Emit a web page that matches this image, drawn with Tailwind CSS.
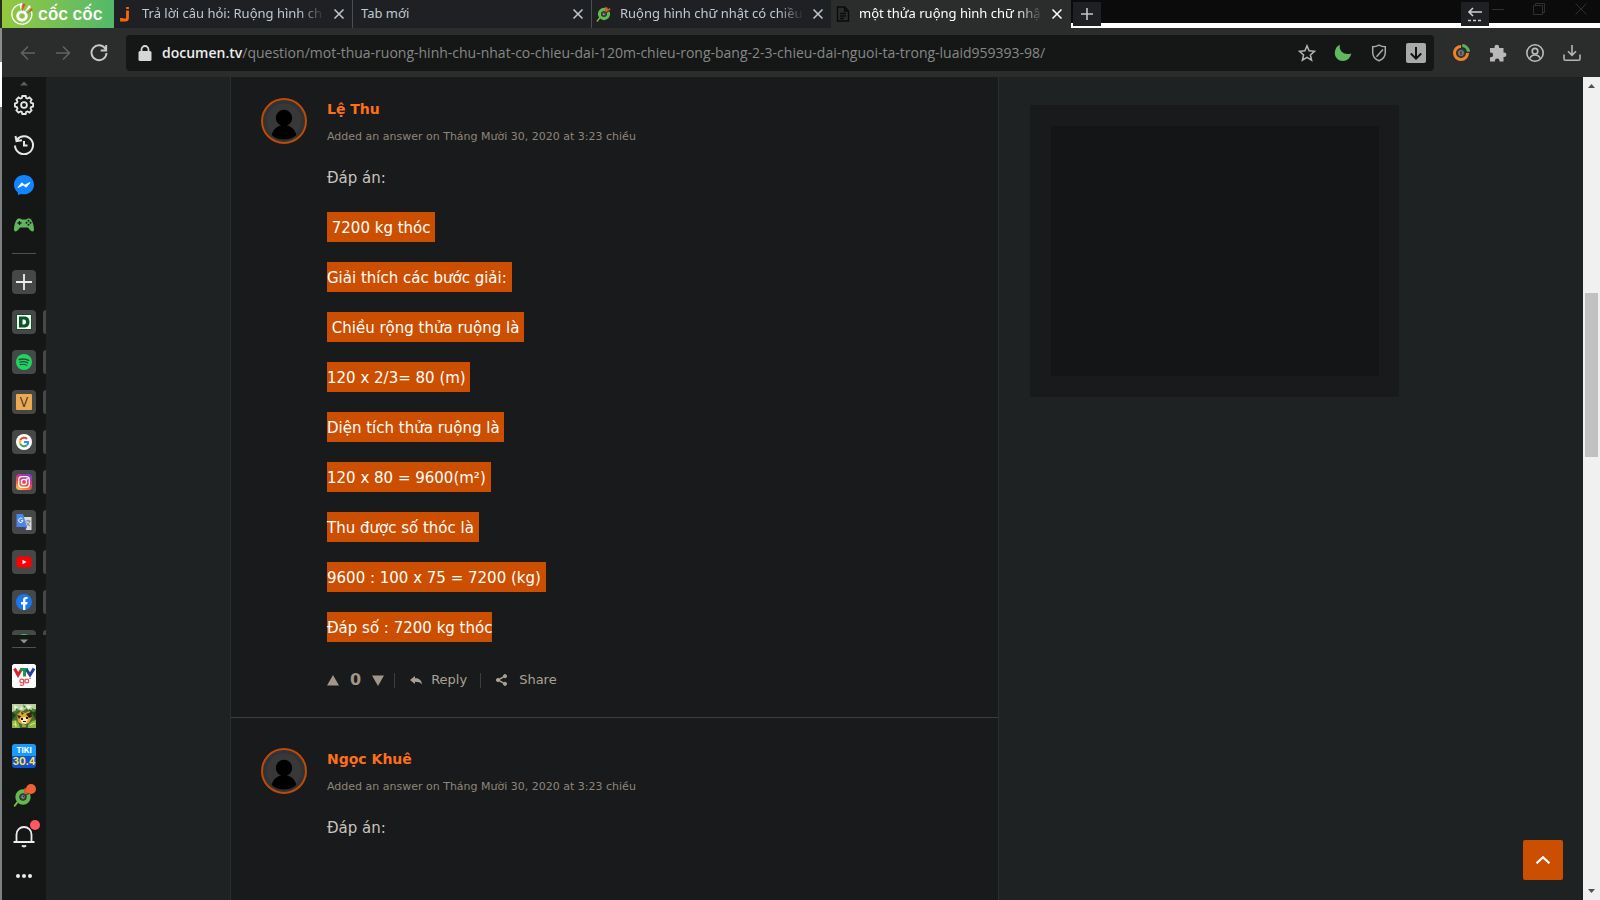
<!DOCTYPE html>
<html lang="vi">
<head>
<meta charset="utf-8">
<title>một thửa ruộng hình chữ nhật</title>
<script src="https://cdn.jsdelivr.net/npm/@tailwindcss/browser@4"></script>
</head>
<body class="flex h-screen overflow-hidden bg-[#1e2223] font-['DejaVu_Sans',sans-serif]">
<svg class="hidden">
  <symbol id="x" viewBox="0 0 12 12"><path d="M1.500 1.500l9 9M10.500 1.500l-9 9" stroke="currentColor" stroke-width="1.500" fill="none"/></symbol>
  <symbol id="coc" viewBox="0 0 24 24">
    <path d="M7 16L2 22.500" stroke="#7cc142" stroke-width="2.200" stroke-linecap="round"/>
    <circle cx="12" cy="12" r="6.700" fill="none" stroke="#62b94c" stroke-width="5"/>
    <path d="M12 12L14 1l4 2z" fill="#e2572b"/><path d="M12 12L19 4l3 3z" fill="#2b2b2b"/><path d="M13 11l7-8 2 2z" fill="#e2572b"/>
    <circle cx="12" cy="12" r="4.200" fill="#353a3d"/><circle cx="12" cy="12" r="2" fill="#9aa0a3"/><circle cx="12.400" cy="11.600" r="1" fill="#333"/>
  </symbol>
  <symbol id="avatar" viewBox="0 0 46 46">
    <circle cx="23" cy="23" r="22" fill="#2f3335" stroke="#bd4a05" stroke-width="2"/>
    <circle cx="23" cy="23" r="17.500" fill="#383838"/>
    <circle cx="23" cy="20" r="8.200" fill="#000"/>
    <path d="M20 25h6v2.500c5 1 8 4.500 9.300 9.500-3 3-7.500 4.500-12.300 4.500S13.700 40 10.700 37c1.300-5 4.300-8.500 9.300-9.500z" fill="#000"/>
  </symbol>
</svg>

<div class="flex w-[2px] shrink-0 flex-col bg-[#7d8083]">
  <div class="h-7 bg-[#24301c]"></div><div class="h-[34px] bg-[#8a8c8e]"></div><div class="h-[45px] bg-white"></div>
</div>

<div class="flex min-w-0 flex-1 flex-col">
  <header class="shrink-0 font-['Open_Sans',sans-serif]">
    <!-- tab strip -->
    <div class="flex h-7 bg-[#1f2023] font-['Noto_Sans',sans-serif] text-[13px] text-[#bfc9d2]">
      <button class="flex w-28 shrink-0 items-center gap-1 bg-linear-to-r from-[#93c83d] to-[#50b968] pl-2 text-white" aria-label="Cốc Cốc">
        <svg class="size-6 shrink-0" viewBox="0 0 24 24"><path d="M13 2.200A10 10 0 1 0 21.500 9.500" fill="none" stroke="#fff" stroke-width="1.300"/><circle cx="12" cy="14" r="4.300" fill="none" stroke="#fff" stroke-width="3"/><path d="M9 2l2 6 1-7z" fill="#fff"/><path d="M12 10l.5-8.500 3 .5z" fill="#e2492c"/><path d="M14 11l5-8 2 2z" fill="#fff"/><path d="M16 12l6-6 .5 2z" fill="#e2492c"/></svg>
        <span class="font-['Inter',sans-serif] text-[17px] leading-7 font-semibold whitespace-nowrap">cốc cốc</span>
      </button>
      <div role="tab" class="flex min-w-0 basis-[239px] items-center gap-2 border-r border-[#4c4d50] pr-[7px] pl-1">
        <svg class="size-4 shrink-0" viewBox="0 0 16 16"><path d="M9.500 1v2M9.500 4.500V12c0 1.200-1 2-2 2H3.500v-2" stroke="#f60" stroke-width="2.800" fill="none"/></svg>
        <span class="min-w-0 flex-1 overflow-hidden whitespace-nowrap [mask-image:linear-gradient(to_right,black_86%,transparent)]">Trả lời câu hỏi: Ruộng hình ch</span>
        <button aria-label="Đóng"><svg class="size-3"><use href="#x"/></svg></button>
      </div>
      <div role="tab" class="flex min-w-0 basis-[239px] items-center gap-2 border-r border-[#4c4d50] pr-[7px] pl-2">
        <span class="min-w-0 flex-1 overflow-hidden whitespace-nowrap">Tab mới</span>
        <button aria-label="Đóng"><svg class="size-3"><use href="#x"/></svg></button>
      </div>
      <div role="tab" class="flex min-w-0 basis-[239px] items-center gap-2 pr-[7px] pl-1">
        <svg class="size-4 shrink-0"><use href="#coc"/></svg>
        <span class="min-w-0 flex-1 overflow-hidden whitespace-nowrap [mask-image:linear-gradient(to_right,black_86%,transparent)]">Ruộng hình chữ nhật có chiều</span>
        <button aria-label="Đóng"><svg class="size-3"><use href="#x"/></svg></button>
      </div>
      <div role="tab" aria-selected="true" class="flex min-w-0 basis-[240px] items-center gap-2 bg-[#2b2c2c] pr-2 pl-1 text-white">
        <svg class="size-4 shrink-0" viewBox="0 0 16 16" fill="none" stroke="#0a0a0a" stroke-width="1.400"><path d="M2.500 1h7l4 4v10h-11zM9.500 1v4h4M5 7.500h6M5 10h6M5 12.500h4"/></svg>
        <span class="min-w-0 flex-1 overflow-hidden whitespace-nowrap [mask-image:linear-gradient(to_right,black_86%,transparent)]">một thửa ruộng hình chữ nhậ</span>
        <button aria-label="Đóng"><svg class="size-3"><use href="#x"/></svg></button>
      </div>
      <div class="flex flex-1 items-start justify-between bg-linear-to-b from-[#0b0b0b] from-[23px] to-white to-[23px] pt-[2px] pl-[2px]">
        <button aria-label="Tab mới" class="flex h-6 w-7 items-center justify-center bg-[#1f2023]"><svg class="size-3" viewBox="0 0 12 12" stroke="#c4c4c4" stroke-width="1.600"><path d="M6 0v12M0 6h12"/></svg></button>
        <div class="flex items-start text-[#303030]">
          <button aria-label="Thu gọn" class="flex h-6 w-7 items-center justify-center bg-[#1f2023]"><svg class="size-4" viewBox="0 0 16 16" fill="none" stroke="#cfcfcf" stroke-width="1.600"><path d="M15 6H2M6 2L2 6l4 4"/><path d="M1 14.500h14" stroke-dasharray="3 2"/></svg></button>
          <button aria-label="Thu nhỏ" class="mt-[2px] ml-[3px] w-4"><svg class="size-3" viewBox="0 0 12 12" stroke="currentColor"><path d="M0 5.500h12"/></svg></button>
          <button aria-label="Phóng to" class="mt-[1px] ml-[25px]"><svg class="size-3" viewBox="0 0 12 12" fill="none" stroke="currentColor"><path d="M.5 2.500h9v9h-9zM2.500 2.500v-2h9v9h-2"/></svg></button>
          <button aria-label="Đóng cửa sổ" class="mt-[1px] mr-[13px] ml-[30px]"><svg class="size-3" viewBox="0 0 12 12" stroke="currentColor"><path d="M.5.5l11 11M11.500.5l-11 11"/></svg></button>
        </div>
      </div>
    </div>
    <!-- toolbar -->
    <div class="flex h-[49px] items-center bg-[#2b2c2c] pr-[19px] pl-[18px]">
      <div class="flex items-center gap-[19px]">
        <button aria-label="Lùi"><svg class="size-4" viewBox="0 0 16 16" fill="none" stroke="#626363" stroke-width="1.500"><path d="M15 8H2M8 1.500L1.500 8 8 14.500"/></svg></button>
        <button aria-label="Tiến"><svg class="size-4" viewBox="0 0 16 16" fill="none" stroke="#626363" stroke-width="1.500"><path d="M1 8h13M8 1.500L14.500 8 8 14.500"/></svg></button>
        <button aria-label="Tải lại"><svg class="size-[18px]" viewBox="0 0 18 18" fill="none" stroke="#c9c9c9" stroke-width="1.900"><path d="M15.500 5A7.500 7.500 0 1 0 16.500 9M16.200 1v5.500h-5.500"/></svg></button>
      </div>
      <div class="ml-[18px] flex h-9 min-w-0 flex-1 items-center rounded-[4px] bg-[#151716] pr-2 pl-3">
        <svg class="mr-[10px] h-4 w-[14px] shrink-0" viewBox="0 0 14 16"><rect x=".5" y="6" width="13" height="10" rx="1.500" fill="#d6d6d6"/><path d="M3.500 7V4.500a3.500 3.500 0 0 1 7 0V7" fill="none" stroke="#d6d6d6" stroke-width="1.800"/></svg>
        <div role="textbox" aria-label="Địa chỉ" class="min-w-0 flex-1 overflow-hidden text-sm whitespace-nowrap text-[#868787]"><span class="font-semibold text-[#ececec]">documen.tv</span>/question/mot-thua-ruong-hinh-chu-nhat-co-chieu-dai-120m-chieu-rong-bang-2-3-chieu-dai-nguoi-ta-trong-luaid959393-98/</div>
        <div class="flex items-center gap-[18px]">
          <button aria-label="Đánh dấu"><svg class="size-[18px]" viewBox="0 0 18 18" fill="none" stroke="#b5b5b5" stroke-width="1.500"><path d="M9 1.800l2.100 5 5.400.5-4.100 3.600 1.200 5.300L9 13.400l-4.600 2.800 1.200-5.300L1.500 7.300l5.400-.5z"/></svg></button>
          <button aria-label="Chế độ tối"><svg class="size-[18px]" viewBox="0 0 18 18"><path d="M6 .8C4.500 6.500 9.500 12 17.300 9.500 16.500 14 13 17 9 17 4.500 17 .8 13.500.8 9 .8 5 2.800 2 6 .8z" fill="#62b860"/></svg></button>
          <button aria-label="Chặn quảng cáo"><svg class="size-[18px]" viewBox="0 0 18 18" fill="none" stroke="#a9a9a9" stroke-width="1.500"><path d="M9 1.200c2 1.100 4 1.600 6.300 1.600v5.700c0 4-2.300 6.700-6.300 8.300-4-1.600-6.300-4.300-6.300-8.300V2.800C5 2.800 7 2.300 9 1.200zM13 5.500L6.500 12.800"/></svg></button>
          <button aria-label="Tải xuống" class="rounded-[2px] bg-[#a8a9a9]"><svg class="size-5" viewBox="0 0 20 20" fill="none" stroke="#111" stroke-width="2"><path d="M10 4v11M4.800 10.500L10 15.600l5.200-5.100"/></svg></button>
        </div>
      </div>
      <div class="ml-[18px] flex items-center gap-[19px]">
        <button aria-label="Tiện ích"><svg class="size-[18px]" viewBox="0 0 18 18" fill="none"><circle cx="9" cy="9" r="6.500" stroke="#f58220" stroke-width="3"/><path d="M9 1A8 8 0 0 1 17 9H9z" fill="#22302a"/><path d="M10.300 1.500A7 7 0 0 1 16.500 7.700" stroke="#57b35b" stroke-width="3.200"/><circle cx="9" cy="9" r="4.500" fill="#33383c"/><circle cx="9" cy="9" r="2.900" fill="#777"/><path d="M9 7v4" stroke="#333" stroke-width="1.200"/></svg></button>
        <button aria-label="Phần mở rộng"><svg class="size-[18px]" viewBox="0 0 18 18" fill="#b9b9b9"><path d="M1 4h4.500V3a2.300 2.300 0 0 1 4.600 0v1h4.400v4.400h.6a2.300 2.300 0 0 1 0 4.600h-.6v4.500h-4v-.8a2.300 2.300 0 0 0-4.600 0v.8H1v-4.200h.8a2.300 2.300 0 0 0 0-4.700H1z"/></svg></button>
        <button aria-label="Hồ sơ"><svg class="size-[18px]" viewBox="0 0 18 18" fill="none" stroke="#bcbcbc" stroke-width="1.600"><circle cx="9" cy="9" r="8.200"/><circle cx="9" cy="7.200" r="2.800"/><path d="M3.800 14.500c1-2.600 3-3.500 5.200-3.500s4.200.9 5.200 3.500"/></svg></button>
        <button aria-label="Tệp đã tải"><svg class="size-[18px]" viewBox="0 0 18 18" fill="none" stroke="#b5b5b5" stroke-width="1.600"><path d="M9 1v10M5 7.300l4 4 4-4M1 10.500V15a1.300 1.300 0 0 0 1.300 1.300h13.400A1.300 1.300 0 0 0 17 15v-4.500"/></svg></button>
      </div>
    </div>
  </header>

  <div class="flex min-h-0 flex-1">
    <!-- browser sidebar -->
    <nav class="flex w-11 shrink-0 flex-col bg-[#151716] pb-3">
      <div class="flex h-4 justify-center pt-1"><svg class="h-[5px] w-2" viewBox="0 0 8 5"><path d="M0 4.500L4 .5l4 4z" fill="#5b5c5c"/></svg></div>
      <div class="flex flex-col items-center gap-4">
        <button aria-label="Cài đặt" class="flex size-6 items-center justify-center"><svg class="size-5" viewBox="0 0 20 20" fill="none" stroke="#e6e6e6" stroke-width="1.800"><path d="M8.300 1h3.400l.5 2 1.400.6 1.900-1.100 2.100 2.100-1.100 1.900.6 1.400 2 .5v3.200l-2 .5-.6 1.400 1.100 1.900-2.100 2.100-1.900-1.100-1.400.6-.5 2H8.300l-.5-2-1.400-.6-1.900 1.100-2.100-2.100 1.100-1.900-.6-1.400-2-.5V8.400l2-.5.6-1.400-1.100-1.900 2.100-2.100 1.900 1.100L7.800 3z"/><circle cx="10" cy="10" r="2.900"/></svg></button>
        <button aria-label="Lịch sử" class="flex size-6 items-center justify-center"><svg class="size-5" viewBox="0 0 20 20" fill="none" stroke="#e6e6e6" stroke-width="2"><path d="M3 4.500A9 9 0 1 1 1 10.500M1.500 1l1 5 5.500-.8M10 6v4.500h3.500"/></svg></button>
        <button aria-label="Messenger" class="flex size-6 items-center justify-center"><svg class="size-5" viewBox="0 0 20 20"><path d="M10 0c5.700 0 10 4.200 10 9.700s-4.300 9.600-10 9.600c-1 0-2-.1-2.900-.4L4 20l-.3-2.800C1.400 15.400 0 12.800 0 9.700 0 4.200 4.300 0 10 0z" fill="#1284ff"/><path d="M4 12.600l3.700-4.800 3 2.300L16 7.500l-3.800 4.700-3-2.200z" fill="#fff" stroke="#fff" stroke-width=".8"/></svg></button>
        <button aria-label="Trò chơi" class="flex size-6 items-center justify-center"><svg class="h-[14px] w-5" viewBox="0 0 20 14"><path d="M4.500.5h2l1 1h5l1-1h2c2.500 0 4.500 7 4.500 11 0 2.500-2.500 2.500-4 .5L14 9.500H6L4 12c-1.500 2-4 2-4-.5 0-4 2-11 4.500-11z" fill="#5fb75b"/><path d="M3.500 5h4M5.500 3v4" stroke="#151716" stroke-width="1.300"/><circle cx="14.500" cy="2.800" r="1" fill="#151716"/><circle cx="14.500" cy="6.800" r="1" fill="#151716"/><circle cx="12.500" cy="4.800" r="1" fill="#151716"/><circle cx="16.500" cy="4.800" r="1" fill="#151716"/></svg></button>
      </div>
      <div class="mx-[10px] my-4 h-px shrink-0 bg-[#4f5050]"></div>
      <div class="flex min-h-0 flex-1 flex-col gap-4 overflow-hidden">
        <div class="flex shrink-0 gap-[7px] pl-[10px]"><button aria-label="Thêm" class="flex size-6 items-center justify-center rounded-[4px] bg-[#464747]"><svg class="size-4" viewBox="0 0 16 16" stroke="#ededed" stroke-width="1.800"><path d="M8 0v16M0 8h16"/></svg></button></div>
        <div class="flex shrink-0 gap-[7px] pl-[10px]"><a href="#" aria-label="Documen" class="flex size-6 items-center justify-center rounded-[4px] bg-[#464747]"><svg class="size-4" viewBox="0 0 16 16"><path d="M0 0h16v16H0z" fill="#0c5421"/><path d="M1 1h14v14H1z" fill="#fff"/><path d="M3 2.500h5.500c3 0 5 2.200 5 5.500s-2 5.500-5 5.500H3zM6.500 5.500v5h1.500c1.300 0 2-.9 2-2.500s-.7-2.500-2-2.500z" fill="#0c5421" fill-rule="evenodd"/></svg></a><span class="h-6 w-[3px] rounded-l-[3px] bg-[#464747]"></span></div>
        <div class="flex shrink-0 gap-[7px] pl-[10px]"><a href="#" aria-label="Spotify" class="flex size-6 items-center justify-center rounded-[4px] bg-[#464747]"><svg class="size-4" viewBox="0 0 16 16" fill="none" stroke="#33443a" stroke-linecap="round"><circle cx="8" cy="8" r="8" fill="#1ed760" stroke="none"/><path d="M3.300 5.500c3.200-.9 6.700-.6 9.500 1" stroke-width="1.500"/><path d="M3.800 8.100c2.800-.8 5.700-.5 8 .9" stroke-width="1.300"/><path d="M4.200 10.600c2.400-.6 4.600-.4 6.600.8" stroke-width="1.100"/></svg></a><span class="h-6 w-[3px] rounded-l-[3px] bg-[#464747]"></span></div>
        <div class="flex shrink-0 gap-[7px] pl-[10px]"><a href="#" class="flex size-6 items-center justify-center rounded-[4px] bg-[#464747]"><span class="flex size-4 items-center justify-center rounded-[1px] bg-[#eda852] font-['Open_Sans',sans-serif] text-sm leading-4 text-[#3d3d3d]">V</span></a><span class="h-6 w-[3px] rounded-l-[3px] bg-[#464747]"></span></div>
        <div class="flex shrink-0 gap-[7px] pl-[10px]"><a href="#" aria-label="Google" class="flex size-6 items-center justify-center rounded-[4px] bg-[#464747]"><svg class="size-4" viewBox="0 0 16 16" fill="none" stroke-width="2"><circle cx="8" cy="8" r="8" fill="#fff"/><path d="M11 4.900A4.200 4.200 0 0 0 4.300 6.200" stroke="#ea4335"/><path d="M4.300 6.200a4.200 4.200 0 0 0 0 3.700" stroke="#fbbc05"/><path d="M4.300 9.900a4.200 4.200 0 0 0 6.500 1.400" stroke="#34a853"/><path d="M10.800 11.300A4 4 0 0 0 12.200 8H8" stroke="#4285f4"/></svg></a><span class="h-6 w-[3px] rounded-l-[3px] bg-[#464747]"></span></div>
        <div class="flex shrink-0 gap-[7px] pl-[10px]"><a href="#" aria-label="Instagram" class="flex size-6 items-center justify-center rounded-[4px] bg-[#464747]"><svg class="size-4" viewBox="0 0 16 16" fill="none" stroke="#fff" stroke-width="1.300"><defs><linearGradient id="ig" x1="0.200" y1="1" x2="0.700" y2="0"><stop offset="0" stop-color="#fdc453"/><stop offset=".4" stop-color="#f2503f"/><stop offset=".7" stop-color="#cf2f90"/><stop offset="1" stop-color="#7a3fd0"/></linearGradient></defs><rect width="16" height="16" rx="3.500" fill="url(#ig)" stroke="none"/><rect x="2.700" y="2.700" width="10.600" height="10.600" rx="3"/><circle cx="8" cy="8" r="2.600"/><circle cx="11" cy="5" r=".3"/></svg></a><span class="h-6 w-[3px] rounded-l-[3px] bg-[#464747]"></span></div>
        <div class="flex shrink-0 gap-[7px] pl-[10px]"><a href="#" aria-label="Google Dịch" class="flex size-6 items-center justify-center rounded-[4px] bg-[#464747]"><svg class="size-4" viewBox="0 0 16 16"><path d="M7 3h8.500v13H10z" fill="#dcdcdc"/><path d="M9.500 7h5M12 5.800V7M13.700 7c-.4 2.500-1.800 4-3.500 5M10.500 8.500c.7 1.500 2 2.800 3.700 3.500" fill="none" stroke="#6c7b86" stroke-width=".9"/><path d="M.5 0H7l4 13H.5z" fill="#4a86ec"/><path d="M8 13h3l-1.500 3z" fill="#2a56c6"/><path d="M6.500 4.900A2.200 2.200 0 1 0 7 6.700H5" fill="none" stroke="#fff" stroke-width="1"/></svg></a><span class="h-6 w-[3px] rounded-l-[3px] bg-[#464747]"></span></div>
        <div class="flex shrink-0 gap-[7px] pl-[10px]"><a href="#" aria-label="YouTube" class="flex size-6 items-center justify-center rounded-[4px] bg-[#464747]"><svg class="size-4" viewBox="0 0 16 16"><rect x=".5" y="2.500" width="15" height="11" rx="2.500" fill="#f00"/><path d="M6.500 5.800v4.400L10.500 8z" fill="#fff"/></svg></a><span class="h-6 w-[3px] rounded-l-[3px] bg-[#464747]"></span></div>
        <div class="flex shrink-0 gap-[7px] pl-[10px]"><a href="#" aria-label="Facebook" class="flex size-6 items-center justify-center rounded-[4px] bg-[#464747]"><svg class="size-4" viewBox="0 0 16 16"><circle cx="8" cy="8" r="8" fill="#1877f2"/><path d="M7 16v-5.500H5V8h2V6.300C7 4.200 8.200 3 10 3l1.600.1v2h-1c-1 0-1.200.5-1.200 1.200V8h2.200l-.4 2.500H9.400V16z" fill="#fff"/></svg></a><span class="h-6 w-[3px] rounded-l-[3px] bg-[#464747]"></span></div>
        <div class="flex shrink-0 gap-[7px] pl-[10px]"><a href="#" aria-label="Ứng dụng" class="flex size-6 items-center justify-center rounded-[4px] bg-[#464747]"><span class="size-4 rounded-full bg-[#1fd15c]"></span></a><span class="h-6 w-[3px] rounded-l-[3px] bg-[#464747]"></span></div>
      </div>
      <div class="flex h-3 shrink-0 items-center justify-center"><svg class="h-[5px] w-2" viewBox="0 0 8 5"><path d="M0 .5L4 4.500l4-4z" fill="#8f9090"/></svg></div>
      <div class="mx-[10px] mb-4 h-px shrink-0 bg-[#4f5050]"></div>
      <div class="flex shrink-0 flex-col items-center gap-4">
        <a href="#" aria-label="VTV go" class="size-6"><svg viewBox="0 0 24 24"><rect width="24" height="24" rx="2.500" fill="#fff"/><g fill="none" stroke-width="3"><path d="M2.500 4.500L6 11l4-6.500" stroke="#d8232f"/><path d="M8 5.500h8M12.500 5v7.500" stroke="#179b4c"/><path d="M14.500 5.500L18 11l4-6.500" stroke="#27419a"/></g><g fill="none" stroke="#ea4b56" stroke-width="1.200"><circle cx="9.800" cy="17" r="1.900"/><path d="M11.700 15v5c0 1.500-3 1.800-3.800.6"/><circle cx="14.800" cy="17" r="1.900"/><path d="M17.300 14.500h1.500"/></g></svg></a>
        <a href="#" aria-label="Trò chơi nông trại" class="size-6"><svg viewBox="0 0 24 24"><path d="M0 0h24v24H0z" fill="#466b2c"/><path d="M0 0h24v5l-5 1-4-2-4 3-5-1-6 2z" fill="#b9cfa2"/><path d="M2 1l4 2-3 4zM14 1l6 1-4 4zM9 2l2 3-3 1z" fill="#eef3d8"/><path d="M4 4l3 2-4 3zM20 4l3 2-3 3zM11 0l3 3-2 1z" fill="#3f8a3a"/><path d="M0 8l4 3-4 5zM20 9l4-2v9zM17 6l4 2-2 3z" fill="#1c4118"/><path d="M5 11l4-4 4 2 5-2 2 6-3 6-6 2-5-3z" fill="#dca638"/><path d="M5 11l4 1-2 3zM14 10l5-2 1 5-3 1zM9 8l3 1-2 2z" fill="#332312"/><path d="M8 15l4-2 4 2-2 5-4-1z" fill="#f7ebb4"/><path d="M9 14h2v2H9zM14 13h2v2h-2zM11 17h3v1h-3z" fill="#231809"/><path d="M0 17l4-1 3 4 1 4H0zM24 16l-4 1-4 4v3h8z" fill="#8bb642"/><path d="M1 20l4 1M18 21l5-2M10 22h4M3 17l1 6" stroke="#e8e49a"/></svg></a>
        <a href="#" aria-label="Tiki 30.4" class="flex size-6 flex-col items-center overflow-hidden rounded-[3px] bg-linear-to-b from-[#1a9bfb] from-50% to-[#1150d8] to-50% font-['Inter',sans-serif] leading-[11px] font-bold text-white"><span class="pt-px text-[8px]">TIKI</span><span class="text-[10px] text-[#ffe436]">30.4</span></a>
        <a href="#" aria-label="Cốc Cốc" class="relative size-6"><svg class="size-6" viewBox="0 0 24 24"><use href="#coc" x="1" y="3" width="20" height="20"/></svg><span class="absolute top-0 right-0 size-[10px] rounded-full bg-[#ef6237]"></span></a>
        <button aria-label="Thông báo" class="relative size-6"><svg viewBox="0 0 24 24" fill="none" stroke="#ededed" stroke-width="1.800"><path d="M1.500 18h21M4.500 18v-7.500a7.500 7.500 0 0 1 15 0V18"/><path d="M10 21.500q2 1.700 4 0" stroke-width="2"/></svg><span class="absolute -top-1 -right-1 size-[10px] rounded-full bg-[#ff5a5f]"></span></button>
        <button aria-label="Thêm nữa" class="size-6"><svg viewBox="0 0 24 24" fill="#ededed"><circle cx="6" cy="12" r="2"/><circle cx="12" cy="12" r="2"/><circle cx="18" cy="12" r="2"/></svg></button>
      </div>
    </nav>

    <!-- web page -->
    <div class="relative min-w-0 flex-1 overflow-hidden">
      <div class="mx-auto flex h-full max-w-[1169px] items-start gap-[31px]">
        <main class="min-h-full min-w-0 flex-1 border-x border-[#2b2f31] bg-[#191a1b] text-[#c8c3bc]">
          <article class="flex gap-5 border-b border-[#3b3e40] px-[30px] pt-[21px] pb-[25px]">
            <svg class="size-[46px] shrink-0"><use href="#avatar"/></svg>
            <div class="min-w-0 flex-1 text-[15px] leading-7">
              <a href="#" class="block text-sm leading-[22px] font-bold text-[#ff6f1a]">Lệ Thu</a>
              <p class="mt-[7px] text-[11px] leading-5 text-[#8e867a]">Added an answer on Tháng Mười 30, 2020 at 3:23 chiều</p>
              <div class="mt-[15px] flex flex-col items-start gap-5 whitespace-pre text-white">
                <p class="pt-[2px] text-[#c8c3bc]">Đáp án:</p>
                <p class="bg-[#cc4e00] pt-[2px]"> 7200 kg thóc </p>
                <p class="bg-[#cc4e00] pt-[2px]">Giải thích các bước giải: </p>
                <p class="bg-[#cc4e00] pt-[2px]"> Chiều rộng thửa ruộng là </p>
                <p class="bg-[#cc4e00] pt-[2px]">120 x 2/3= 80 (m) </p>
                <p class="bg-[#cc4e00] pt-[2px]">Diện tích thửa ruộng là </p>
                <p class="bg-[#cc4e00] pt-[2px]">120 x 80 = 9600(m²) </p>
                <p class="bg-[#cc4e00] pt-[2px]">Thu được số thóc là </p>
                <p class="bg-[#cc4e00] pt-[2px]">9600 : 100 x 75 = 7200 (kg) </p>
                <p class="bg-[#cc4e00] pt-[2px]">Đáp số : 7200 kg thóc</p>
              </div>
              <div class="mt-[26px] flex h-6 items-center text-[13px] leading-6 text-[#aaa297]">
                <button aria-label="Bình chọn lên"><svg class="h-[11px] w-3" viewBox="0 0 12 11"><path d="M0 10.500L6 0l6 10.500z" fill="#a19789"/></svg></button>
                <span class="mx-[11px] text-base font-bold text-[#a19789]">0</span>
                <button aria-label="Bình chọn xuống"><svg class="h-[11px] w-3" viewBox="0 0 12 11"><path d="M0 .5L6 11l6-10.500z" fill="#a19789"/></svg></button>
                <span class="ml-[10px] h-[15px] w-px bg-[#3b3e40]"></span>
                <button class="ml-[15px] flex items-center gap-[9px]"><svg class="h-[9px] w-3" viewBox="0 0 12 9"><path d="M5 0v2.300c4 0 6.500 1.700 7 6.200C10.500 6.300 8.500 5.700 5 5.700V8L0 4z" fill="#a8a095"/></svg>Reply</button>
                <span class="ml-[13px] h-[15px] w-px bg-[#3b3e40]"></span>
                <button class="ml-[15px] flex items-center gap-3"><svg class="h-3 w-[11px]" viewBox="0 0 11 12" fill="#a8a095" stroke="#a8a095"><path d="M9 2.200L2 6l7 3.800" fill="none" stroke-width="1.500"/><circle cx="9" cy="2.200" r="1.600"/><circle cx="2" cy="6" r="1.600"/><circle cx="9" cy="9.800" r="1.600"/></svg>Share</button>
              </div>
            </div>
          </article>
          <article class="flex gap-5 px-[30px] pt-[30px]">
            <svg class="size-[46px] shrink-0"><use href="#avatar"/></svg>
            <div class="min-w-0 flex-1 text-[15px] leading-7">
              <a href="#" class="block text-sm leading-[22px] font-bold text-[#ff6f1a]">Ngọc Khuê</a>
              <p class="mt-[7px] text-[11px] leading-5 text-[#8e867a]">Added an answer on Tháng Mười 30, 2020 at 3:23 chiều</p>
              <p class="mt-[15px] pt-[2px]">Đáp án:</p>
            </div>
          </article>
        </main>
        <aside class="mt-7 w-[369px] shrink-0 bg-[#191a1b] py-[21px] pr-5 pl-[21px]"><div class="h-[250px] bg-[#141516]"></div></aside>
      </div>
      <button aria-label="Lên đầu trang" class="absolute right-5 bottom-5 flex size-10 items-center justify-center rounded-[2px] bg-[#cc4e00]"><svg class="h-2 w-4" viewBox="0 0 16 8" fill="none" stroke="#fff" stroke-width="2.200"><path d="M1.500 7.300L8 1.300l6.500 6"/></svg></button>
    </div>

    <div class="flex w-[17px] shrink-0 flex-col items-center bg-[#f0f0f0]">
      <svg class="size-[17px] shrink-0" viewBox="0 0 17 17"><path d="M5 11l3.500-4 3.500 4z" fill="#505050"/></svg>
      <div class="flex-[199]"></div><div class="w-[13px] flex-[164] bg-[#c1c1c1]"></div><div class="flex-[426]"></div>
      <svg class="size-[17px] shrink-0" viewBox="0 0 17 17"><path d="M5 6l3.500 4L12 6z" fill="#505050"/></svg>
    </div>
  </div>
</div>
</body>
</html>
